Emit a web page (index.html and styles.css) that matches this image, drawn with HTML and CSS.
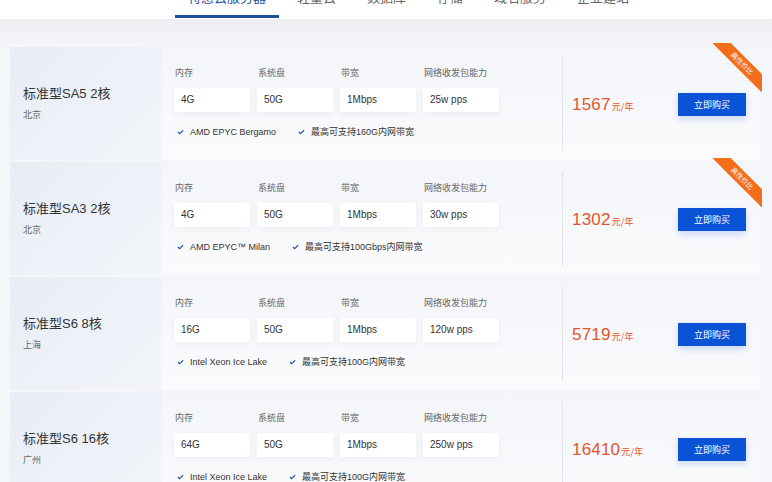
FILE: index.html
```html
<!DOCTYPE html>
<html lang="zh-CN">
<head>
<meta charset="utf-8">
<title>云服务器</title>
<link rel="stylesheet" href="styles.css">
</head>
<body>
<div class="topnav">
  <ul class="tabs">
    <li class="tab active">特惠云服务器</li>
    <li class="tab">轻量云</li>
    <li class="tab">数据库</li>
    <li class="tab">存储</li>
    <li class="tab">域名服务</li>
    <li class="tab">企业建站</li>
  </ul>
</div>
<main class="list">
  <div class="card">
    <div class="ribbon"><span>高性价比</span></div>
    <div class="info"><div class="title">标准型SA5 2核</div><div class="region">北京</div></div>
    <div class="specs">
      <div class="cols">
        <div class="col"><div class="label">内存</div><div class="box">4G</div></div>
        <div class="col"><div class="label">系统盘</div><div class="box">50G</div></div>
        <div class="col"><div class="label">带宽</div><div class="box">1Mbps</div></div>
        <div class="col"><div class="label">网络收发包能力</div><div class="box">25w pps</div></div>
      </div>
      <div class="feats">
        <span class="feat"><svg class="chk" viewBox="0 0 8 6"><path d="M1 3l2 2 4-4"/></svg>AMD EPYC Bergamo</span>
        <span class="feat"><svg class="chk" viewBox="0 0 8 6"><path d="M1 3l2 2 4-4"/></svg>最高可支持160G内网带宽</span>
      </div>
    </div>
    <div class="buy"><div class="price">1567<span class="unit">元/年</span></div><button class="btn">立即购买</button></div>
  </div>

  <div class="card">
    <div class="ribbon"><span>高性价比</span></div>
    <div class="info"><div class="title">标准型SA3 2核</div><div class="region">北京</div></div>
    <div class="specs">
      <div class="cols">
        <div class="col"><div class="label">内存</div><div class="box">4G</div></div>
        <div class="col"><div class="label">系统盘</div><div class="box">50G</div></div>
        <div class="col"><div class="label">带宽</div><div class="box">1Mbps</div></div>
        <div class="col"><div class="label">网络收发包能力</div><div class="box">30w pps</div></div>
      </div>
      <div class="feats">
        <span class="feat"><svg class="chk" viewBox="0 0 8 6"><path d="M1 3l2 2 4-4"/></svg>AMD EPYC™ Milan</span>
        <span class="feat"><svg class="chk" viewBox="0 0 8 6"><path d="M1 3l2 2 4-4"/></svg>最高可支持100Gbps内网带宽</span>
      </div>
    </div>
    <div class="buy"><div class="price">1302<span class="unit">元/年</span></div><button class="btn">立即购买</button></div>
  </div>

  <div class="card">
    <div class="info"><div class="title">标准型S6 8核</div><div class="region">上海</div></div>
    <div class="specs">
      <div class="cols">
        <div class="col"><div class="label">内存</div><div class="box">16G</div></div>
        <div class="col"><div class="label">系统盘</div><div class="box">50G</div></div>
        <div class="col"><div class="label">带宽</div><div class="box">1Mbps</div></div>
        <div class="col"><div class="label">网络收发包能力</div><div class="box">120w pps</div></div>
      </div>
      <div class="feats">
        <span class="feat"><svg class="chk" viewBox="0 0 8 6"><path d="M1 3l2 2 4-4"/></svg>Intel Xeon Ice Lake</span>
        <span class="feat"><svg class="chk" viewBox="0 0 8 6"><path d="M1 3l2 2 4-4"/></svg>最高可支持100G内网带宽</span>
      </div>
    </div>
    <div class="buy"><div class="price">5719<span class="unit">元/年</span></div><button class="btn">立即购买</button></div>
  </div>

  <div class="card">
    <div class="info"><div class="title">标准型S6 16核</div><div class="region">广州</div></div>
    <div class="specs">
      <div class="cols">
        <div class="col"><div class="label">内存</div><div class="box">64G</div></div>
        <div class="col"><div class="label">系统盘</div><div class="box">50G</div></div>
        <div class="col"><div class="label">带宽</div><div class="box">1Mbps</div></div>
        <div class="col"><div class="label">网络收发包能力</div><div class="box">250w pps</div></div>
      </div>
      <div class="feats">
        <span class="feat"><svg class="chk" viewBox="0 0 8 6"><path d="M1 3l2 2 4-4"/></svg>Intel Xeon Ice Lake</span>
        <span class="feat"><svg class="chk" viewBox="0 0 8 6"><path d="M1 3l2 2 4-4"/></svg>最高可支持100G内网带宽</span>
      </div>
    </div>
    <div class="buy"><div class="price">16410<span class="unit">元/年</span></div><button class="btn">立即购买</button></div>
  </div>
</main>
</body>
</html>
```

FILE: styles.css
```css
* { box-sizing: border-box; }
html, body { margin: 0; padding: 0; }
body {
  width: 772px;
  height: 482px;
  overflow: hidden;
  background: #f4f6f9;
  font-family: "Liberation Sans", "Noto Sans CJK SC", Arial, sans-serif;
  color: #333;
}
.topnav {
  height: 19px;
  background: #fff;
  overflow: hidden;
}
.tabs {
  list-style: none;
  margin: -11px 0 0 0;
  padding: 0 0 0 175px;
  display: flex;
  gap: 5px;
}
.tab {
  font-size: 13px;
  line-height: 18px;
  color: #666;
  padding: 0 13px 8px;
  border-bottom: 3px solid transparent;
}
.tab.active { color: #1d4ea0; border-bottom-color: #1d4ea0; }

.list {
  padding: 28px 12px 0 10px;
  background: linear-gradient(#eceef2 0, #f5f6f9 28px, #f5f6f9 100%);
  display: flex;
  flex-direction: column;
  gap: 2px;
}
.card {
  position: relative;
  height: 113px;
  flex: none;
  display: flex;
  background: linear-gradient(#f3f5f8, #fbfbfd);
}
.info {
  width: 151px;
  flex: none;
  padding-left: 13px;
  display: flex;
  flex-direction: column;
  justify-content: center;
  background: linear-gradient(135deg, #e8edf5 0%, #eef2f8 60%, #f2f5f9 100%);
}
.title { font-size: 13px; line-height: 18px; color: #333; }
.region { font-size: 9px; line-height: 13px; color: #666; margin-top: 6px; }

.specs { padding: 20px 0 0 13px; width: 401px; flex: none; }
.cols { display: flex; gap: 7px; }
.col { width: 76px; }
.label { font-size: 9px; line-height: 12px; color: #666; padding-left: 1px; }
.box {
  margin-top: 9px;
  height: 24px;
  line-height: 24px;
  padding-left: 7px;
  background: #fff;
  font-size: 10px;
  color: #333;
  box-shadow: 0 2px 6px rgba(30, 50, 90, 0.06);
}
.feats { display: flex; gap: 22px; margin-top: 14px; padding-left: 3px; }
.feat { display: flex; align-items: center; font-size: 9px; line-height: 12px; color: #333; }
.chk { width: 7px; height: 6px; margin-right: 6px; }
.chk path { fill: none; stroke: #2a5aa8; stroke-width: 1.4; }

.buy {
  flex: 1;
  margin: 10px 0 9px;
  border-left: 1px solid #e2e4e8;
  display: flex;
  align-items: center;
  justify-content: space-between;
  padding: 0 14px 0 9px;
}
.price {
  font-size: 17px;
  color: #e4552d;
  letter-spacing: 0.2px;
  padding-top: 1px;
}
.unit { font-size: 9px; margin-left: 1px; font-family: "Noto Sans CJK SC", sans-serif; }
.btn {
  width: 68px;
  height: 23px;
  border: 0;
  padding: 0;
  background: #0a52d6;
  color: #fff;
  font-family: "Noto Sans CJK SC", sans-serif;
  font-size: 9px;
  box-shadow: 0 3px 7px rgba(10, 82, 214, 0.2);
}
.ribbon {
  position: absolute;
  top: -4px;
  right: -2px;
  width: 49px;
  height: 49px;
  overflow: hidden;
}
.ribbon span {
  position: absolute;
  left: -11px;
  top: 14px;
  width: 80px;
  height: 13px;
  line-height: 13px;
  text-align: center;
  transform: rotate(45deg);
  background: #f36d1a;
  color: #fff;
  font-family: "Noto Sans CJK SC", sans-serif;
  font-size: 7px;
}
```
